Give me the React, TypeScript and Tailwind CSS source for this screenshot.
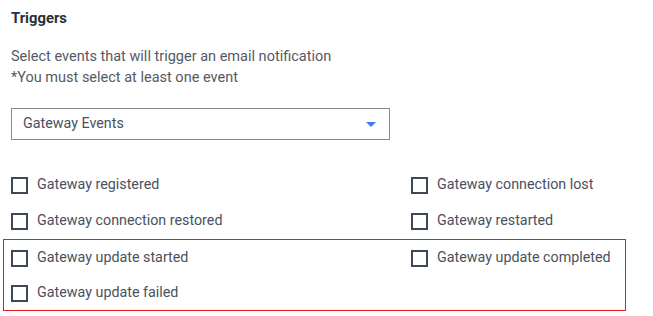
import React from "react";

const font = { fontFamily: "Roboto, 'Noto Sans', sans-serif" };

function Check({ label }: { label: string }) {
  return (
    <label className="flex items-center h-[36px] gap-[9px] text-[14.3px] text-[#4b5160]">
      <span className="w-[17px] h-[17px] border-2 border-[#3d4859] bg-white shrink-0" />
      <span>{label}</span>
    </label>
  );
}

export default function App() {
  return (
    <div style={font} className="w-[653px] h-[316px] bg-white px-[11px] pt-[8px]">
      <h3 className="text-[14.8px] leading-[20px] font-bold text-[#2d3038]">Triggers</h3>

      {/* Description */}
      <div className="mt-[18px] text-[14.5px] leading-[21px] text-[#555a63]">
        <p>Select events that will trigger an email notification</p>
        <p>*You must select at least one event</p>
      </div>

      {/* Event type dropdown */}
      <div className="mt-[20px] w-[379px] h-[32px] border border-[#8a8a8a] flex items-center justify-between pl-[11px] pr-[13px] text-[14.3px] text-[#4b5160]">
        <span>Gateway Events</span>
        <svg width="10" height="5" viewBox="0 0 10 5">
          <path d="M0 0H10L5 5Z" fill="#3b7bf5" />
        </svg>
      </div>

      {/* Event checkboxes */}
      <div className="mt-[27px] grid grid-cols-[400px_1fr]">
        <Check label="Gateway registered" />
        <Check label="Gateway connection lost" />
        <Check label="Gateway connection restored" />
        <Check label="Gateway restarted" />
      </div>
      <div className="-ml-[8px] w-[623px] border border-[#e31b23] pl-[7px] grid grid-cols-[400px_1fr]">
        <Check label="Gateway update started" />
        <Check label="Gateway update completed" />
        <div className="h-[34px] flex items-center">
          <Check label="Gateway update failed" />
        </div>
      </div>
    </div>
  );
}
